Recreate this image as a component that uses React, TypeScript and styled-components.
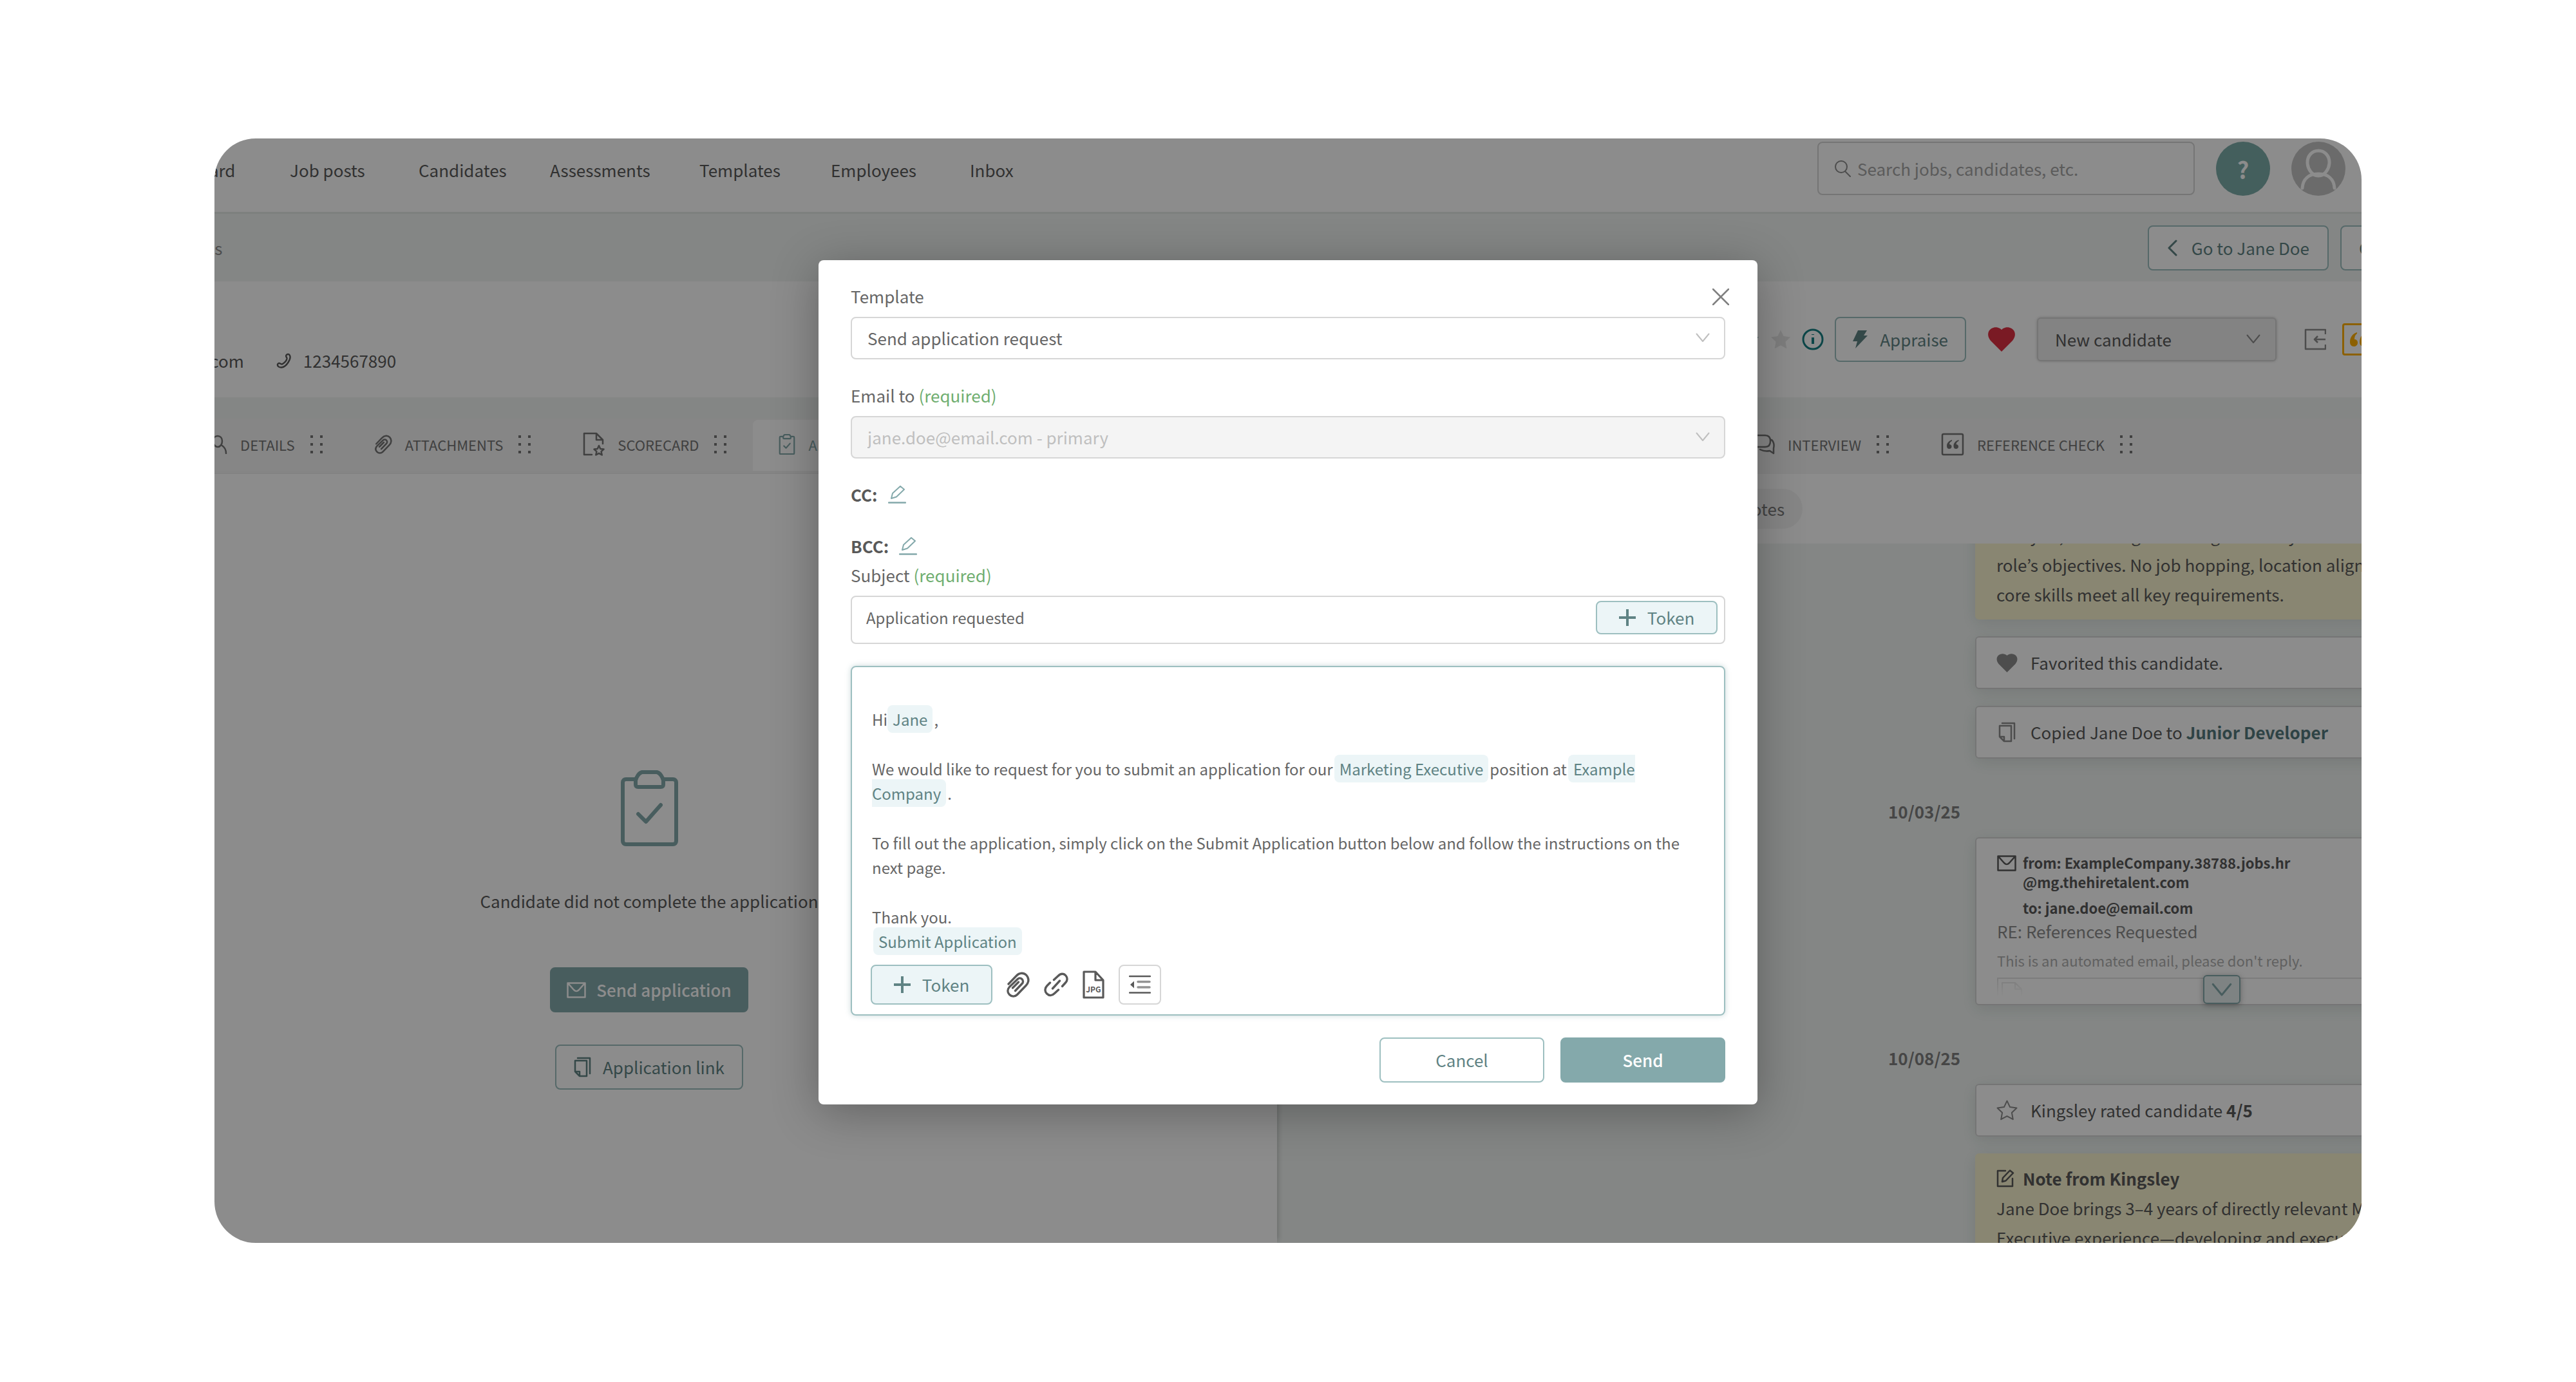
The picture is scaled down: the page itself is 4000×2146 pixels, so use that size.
import React, { useState } from 'react';
import styled, { createGlobalStyle, css } from 'styled-components';

const c = {
  text: '#595959',
  muted: '#8c8c8c',
  label: '#666666',
  teal: '#84a9ab',
  tealDark: '#5f8384',
  tealLine: '#9dbfc0',
  tealSoft: '#ecf5f7',
  line: '#d6d6d6',
  band: '#f1f5f3',
  note: '#f9f4cf',
  green: '#6fae70',
};

const GlobalStyle = createGlobalStyle`
  *, *::before, *::after { box-sizing: border-box; }
  body { margin: 0; background: #fff; }
  body, button, input, select {
    font-family: 'Noto Sans CJK KR', 'Noto Sans', sans-serif;
    font-size: 26px;
    line-height: 40px;
    color: ${c.text};
  }
  button { cursor: pointer; }
  svg { display: block; flex: none; }
  p { margin: 0; }
`;

/* ---------- icons ---------- */

type IconProps = { w: number; h: number; vb: string; sw?: number; children: React.ReactNode };
const Icon = ({ w, h, vb, sw = 2, children }: IconProps) => (
  <svg width={w} height={h} viewBox={vb} fill="none" stroke="currentColor" strokeWidth={sw}
    strokeLinecap="round" strokeLinejoin="round" aria-hidden="true">{children}</svg>
);

const SearchIcon = () => (
  <Icon w={26} h={28} vb="0 0 26 28"><circle cx="11" cy="11" r="9" /><path d="M17 18l8 8" /></Icon>
);
const ChevronDown = ({ w = 22, h = 15 }: { w?: number; h?: number }) => (
  <Icon w={w} h={h} vb="0 0 22 15"><path d="M1.5 1.5L11 13l9.500-11.500" /></Icon>
);
const ChevronLeft = () => (
  <Icon w={16} h={26} vb="0 0 16 26" sw={3}><path d="M14 2L3 13l11 11" /></Icon>
);
const PhoneIcon = () => (
  <Icon w={24} h={24} vb="0 0 24 24" sw={2.4}>
    <path d="M15.500 3.500c1.500-2 4.500-2 5.500.5 2.500 5-5 17.500-12.500 18.500-4 .5-7-2-6.500-4.500.5-2 2.500-2.500 4-1.500 1.500 1 2.500 1.500 4 .5 3-2 6-5.500 6.500-8 .3-2.500-2.500-3-1-5.500z" />
  </Icon>
);
const BoltIcon = () => (
  <svg width="24" height="28" viewBox="0 0 24 28" fill="currentColor" aria-hidden="true">
    <path d="M8 0h14l-5 8h6L4 28l3-11H0z" />
  </svg>
);
const HeartIcon = ({ w, h }: { w: number; h: number }) => (
  <svg width={w} height={h} viewBox="0 0 42 38" fill="currentColor" aria-hidden="true">
    <path d="M21 38L4 21C-1 15-1 8 3 4c5-5 13-5 18 0 5-5 13-5 18 0 4 4 4 11-1 17z" />
  </svg>
);
const STAR = 'M16 1.500l4.600 9.600 10.400 1.400-7.600 7.300 1.900 10.400L16 25.200l-9.300 5 1.900-10.400L1 12.500l10.400-1.400z';
const StarSolid = () => (
  <svg width="32" height="32" viewBox="0 0 32 32" fill="currentColor" aria-hidden="true"><path d={STAR} /></svg>
);
const StarLine = () => <Icon w={33} h={32} vb="0 0 32 32"><path d={STAR} /></Icon>;
const InfoIcon = () => (
  <Icon w={34} h={34} vb="0 0 34 34" sw={3}>
    <circle cx="17" cy="17" r="15" /><path d="M17 14v10M17 9v1" strokeWidth="4" strokeLinecap="butt" />
  </Icon>
);
const ExitIcon = () => (
  <Icon w={34} h={34} vb="0 0 34 34" sw={2.500}>
    <path d="M33 9V2H2v30h31v-7M33 17H16M21 12l-5 5 5 5" strokeLinecap="butt" />
  </Icon>
);
const QuoteGlyph = () => (
  <svg width="28" height="24" viewBox="0 0 28 24" fill="currentColor" aria-hidden="true">
    <path d="M11 1C4 3 0 9 0 16c0 4 2 7 6 7 3 0 6-2 6-6 0-3-2-5-5-5 0-4 1-7 4-9zM26 1c-7 2-11 8-11 15 0 4 2 7 6 7 3 0 6-2 6-6 0-3-2-5-5-5 0-4 1-7 4-9z" />
  </svg>
);
const QuoteBox = () => (
  <Icon w={36} h={36} vb="0 0 36 36" sw={2.500}>
    <rect x="2" y="2" width="32" height="32" rx="2" />
    <path fill="currentColor" stroke="none" d="M17 11c-5 1.500-8 5-8 9.500 0 3 1.500 4.500 3.800 4.500 2.200 0 3.700-1.500 3.700-3.600S15 18 13 18c.3-2.500 1.500-4 4-5.200zM27.500 11c-5 1.500-8 5-8 9.500 0 3 1.500 4.500 3.800 4.500 2.200 0 3.700-1.500 3.700-3.600S25.500 18 23.500 18c.3-2.500 1.500-4 4-5.200z" />
  </Icon>
);
const UserIcon = () => (
  <Icon w={30} h={30} vb="0 0 30 30" sw={2.500}>
    <path d="M15 19c4 0 7-4 7-9s-3-8-7-8-7 3-7 8 3 9 7 9zM8 17c-3 2-6 6-6 12M22 17c3 2 6 6 6 12" />
  </Icon>
);
const ClipIcon = ({ w = 27, h = 30, sw = 2.500 }: { w?: number; h?: number; sw?: number }) => (
  <Icon w={w} h={h} vb="0 0 36 40" sw={sw * 1.2}>
    <path d="M3 19L15 6.500C20 1 27 1 31 5.500s4 11-1 16L16.500 35.500c-3.500 3.500-8.500 3.500-12 0s-3.500-8 0-12L17 11.500c2-2 5-2 7 0s2 5 0 7L13.500 29.500M9.500 25L18.500 16" />
  </Icon>
);
const LinkIcon = () => (
  <Icon w={38} h={38} vb="0 0 38 38" sw={3.400}>
    <path d="M15.500 11.500l6.500-6c4-4.500 9-4 12-.5s2.500 8-1 11.500L28.500 21.500M9.500 16L5 20.500c-4 4-4 9-.5 12.500s8 3.500 12-.5L22.500 27M13.500 25l11-12" />
  </Icon>
);
const JpgIcon = () => (
  <Icon w={34} h={44} vb="0 0 34 44" sw={3.200}>
    <path d="M2 2h18l12 13v27H2zM20 2v13h12" />
    <text x="17" y="34" textAnchor="middle" fontSize="12" fontWeight="700" fill="currentColor" stroke="none">JPG</text>
  </Icon>
);
const IndentIcon = () => (
  <Icon w={34} h={30} vb="0 0 34 30" sw={2.500}>
    <path d="M1 2h32M1 27.500h32" /><path d="M14 10.500h18M14 19h18" strokeOpacity=".65" strokeWidth="3.500" />
    <path d="M8 9.500v11L2 15z" fill="currentColor" stroke="none" />
  </Icon>
);
const ScoreIcon = () => (
  <Icon w={34} h={37} vb="0 0 34 37" sw={2.500}>
    <path d="M14 35H2V2h19l10 10v6M21 2v10h10" />
    <path d="M25 21l2.300 5 5.200.6-3.900 3.600 1.100 5.300-4.700-2.700-4.700 2.700 1.100-5.300-3.900-3.600 5.200-.6z" />
  </Icon>
);
const ClipboardIcon = ({ w, h, sw }: { w: number; h: number; sw: number }) => (
  <Icon w={w} h={h} vb="0 0 89 118" sw={sw}>
    <path d="M22 14H8c-3 0-5 2-5 5v91c0 3 2 5 5 5h73c3 0 5-2 5-5V19c0-3-2-5-5-5H67" />
    <path d="M33 3h23c5 1 9 8 10 13v6c0 3-1 4-4 4H27c-3 0-4-1-4-4v-6c1-5 5-12 10-13zM27 68l12 12 23-26" />
  </Icon>
);
const ChatIcon = () => (
  <Icon w={36} h={32} vb="0 0 36 32" sw={2.500}>
    <path d="M2 25V5c0-2 1-3 3-3h16c5 0 8 3 8 9s-3 9-8 9H9zM31 9c4 4 4 9 3 13v8l-6-4c-5 1-11 0-15-2" />
  </Icon>
);
const MailIcon = () => (
  <Icon w={30} h={25} vb="0 0 30 25" sw={2.500}>
    <path d="M1.500 1.500h27v22h-27zM3 3l8 9c3 3 5 3 8 0l8-9" />
  </Icon>
);
const CopyIcon = () => (
  <Icon w={27} h={32} vb="0 0 27 32" sw={2.500}>
    <path d="M6 2h19v24M2 6h18v24H9l-7-7zM2 23h7v7" />
  </Icon>
);
const EditIcon = () => (
  <Icon w={28} h={28} vb="0 0 28 28" sw={2.500}>
    <path d="M14 2H2v24h23V14M9 19l1-6L21 1.500l5 4L14.500 17.500z" />
  </Icon>
);
const PencilIcon = () => (
  <Icon w={28} h={28} vb="0 0 28 28" sw={2}>
    <path d="M5 20l2-8L19 1l6 5-12 11.500z" /><path d="M1 26.500h26" strokeWidth="2.500" />
  </Icon>
);
const PlusIcon = () => (
  <Icon w={26} h={26} vb="0 0 26 26" sw={4}><path d="M13 0v26M0 13h26" strokeLinecap="butt" /></Icon>
);
const CloseIcon = () => <Icon w={26} h={26} vb="0 0 26 26" sw={2.500}><path d="M1 1l24 24M25 1L1 25" /></Icon>;
const Grip = () => (
  <svg width="20" height="30" viewBox="0 0 20 30" fill="currentColor" aria-hidden="true">
    {[1, 13, 25].map((y) => [0, 15].map((x) => <rect key={`${x}-${y}`} x={x} y={y} width="4" height="4" />))}
  </svg>
);
const AvatarIcon = () => (
  <Icon w={84} h={84} vb="0 0 84 84" sw={5}>
    <path d="M42 14c-10 0-17 8-17 18s7 21 17 21 17-11 17-21-7-18-17-18zM17 72c1-14 10-22 25-22s24 8 25 22" />
  </Icon>
);

/* ---------- frame ---------- */

const Stage = styled.main`
  display: flex;
  flex-direction: column;
  min-height: 100vh;
  padding: 215px 333px 216px;
`;

const Frame = styled.div`
  position: relative;
  display: flex;
  flex: 1 0 0;
  overflow: hidden;
  border-radius: 64px;
`;

const Page = styled.div`
  display: flex;
  flex: 1;
  flex-direction: column;
  height: 1736px;
  margin: -21px -200px 0 -300px;
  background: #fff;
`;

const Row = styled.div<{ $gap: number }>`
  display: flex;
  align-items: center;
  gap: ${(p) => p.$gap}px;
`;

const NavBar = styled.header`
  display: flex;
  flex: none;
  align-items: center;
  justify-content: space-between;
  height: 138px;
  padding: 0 225px 0 200px;
  border-bottom: 3px solid #e4e9e6;
`;

const NavLinks = styled.nav`
  display: grid;
  grid-template-columns: 217px 200px 204px 232px 204px 216px auto;
  padding-top: 4px;
`;

const NavLink = styled.a`
  color: ${c.text};
  text-decoration: none;
`;

const SearchBox = styled.label`
  display: flex;
  align-items: center;
  gap: 8px;
  width: 586px;
  height: 83px;
  padding: 0 24px;
  border: 2px solid ${c.line};
  border-radius: 8px;
  color: ${c.muted};
`;

const SearchInput = styled.input`
  flex: 1;
  min-width: 0;
  border: 0;
  outline: 0;
  background: none;
  &::placeholder { color: #a6a6a6; opacity: 1; }
`;

const RoundButton = styled.button<{ $bg: string }>`
  display: grid;
  place-items: center;
  width: 84px;
  height: 84px;
  padding: 0;
  border: 0;
  border-radius: 50%;
  background: ${(p) => p.$bg};
  color: #fff;
  font-size: 36px;
  font-weight: 700;
`;

const SubBar = styled.div`
  display: flex;
  flex: none;
  align-items: center;
  justify-content: space-between;
  height: 105px;
  padding: 0 33px 0 143px;
  background: ${c.band};
`;

const Button = styled.button<{ $solid?: boolean; $w?: number; $pad?: number; $gap?: number }>`
  display: flex;
  align-items: center;
  justify-content: center;
  gap: ${(p) => p.$gap ?? 18}px;
  height: 70px;
  ${(p) => p.$w && css`width: ${p.$w}px;`}
  padding: 0 ${(p) => p.$pad ?? 26}px;
  border: 2px solid ${(p) => (p.$solid ? c.teal : c.tealLine)};
  border-radius: 8px;
  background: ${(p) => (p.$solid ? c.teal : '#fff')};
  color: ${(p) => (p.$solid ? '#fff' : c.tealDark)};
  font-weight: ${(p) => (p.$solid ? 500 : 400)};
`;

const CandidateBar = styled.section`
  display: flex;
  flex: none;
  align-items: center;
  justify-content: space-between;
  height: 180px;
  padding: 0 180px 0 89px;
`;

const Contact = styled.div`
  display: flex;
  align-self: flex-end;
  align-items: center;
  gap: 50px;
  padding-bottom: 37px;
`;

const Tint = styled.span<{ $color: string }>`
  display: inline-flex;
  color: ${(p) => p.$color};
`;

const Actions = styled.div`
  display: flex;
  align-items: center;
  gap: 34px;
`;

const StageSelect = styled.div`
  position: relative;
  width: 372px;
  color: ${c.muted};
  select {
    width: 100%;
    height: 68px;
    padding: 0 60px 0 26px;
    border: 2px solid ${c.line};
    border-radius: 6px;
    appearance: none;
    background: #efefef;
    box-shadow: 0 0 4px rgba(0, 0, 0, 0.2);
  }
  svg { position: absolute; top: 26px; right: 25px; pointer-events: none; }
`;

const QuoteButton = styled.button`
  display: flex;
  align-items: center;
  width: 50px;
  height: 50px;
  padding: 0 9px;
  border: 3px solid #ffb000;
  border-radius: 4px;
  background: #fff;
  color: #ffb000;
`;

const TabBar = styled.div`
  flex: none;
  padding-top: 33px;
  background: ${c.band};
`;

const Tabs = styled.div`
  display: flex;
  justify-content: space-between;
  padding: 2px 515px 5px 250px;
  background: #f4f4f4;
`;

const Tab = styled.button<{ $active?: boolean }>`
  display: flex;
  align-items: center;
  gap: 20px;
  height: 79px;
  padding: 0 40px 4px;
  border: 0;
  border-radius: 8px 8px 0 0;
  background: ${(p) => (p.$active ? '#fff' : 'transparent')};
  color: ${(p) => (p.$active ? c.teal : '#757575')};
  font-size: 22px;
`;

const TabLabel = styled.span`
  padding-right: 4px;
`;

const Split = styled.div`
  display: grid;
  flex: 1;
  grid-template-columns: 325fr 314fr;
  min-height: 0;
`;

const LeftPanel = styled.section`
  display: flex;
  z-index: 1;
  flex-direction: column;
  align-items: center;
  padding-top: 460px;
  background: #fff;
  box-shadow: 6px 0 8px -4px rgba(0, 0, 0, 0.2);
`;

const EmptyText = styled.p`
  margin: 65px 0 83px;
`;

const LinkAction = styled.div`
  margin-top: 50px;
`;

const RightPanel = styled.section`
  display: flex;
  flex-direction: column;
  min-height: 0;
  background: ${c.band};
`;

const PillBar = styled.div`
  display: flex;
  flex: none;
  align-items: center;
  height: 108px;
  padding-left: 690px;
  background: #fff;
`;

const Pill = styled.button`
  height: 62px;
  padding: 0 28px;
  border: 0;
  border-radius: 31px;
  background: #f4f4f4;
  color: #7a7a7a;
`;

const Feed = styled.div`
  flex: 1;
  overflow: hidden;
  padding: 0 35px 0 949px;
`;

const FeedDate = styled.div`
  margin: 62px 0 20px;
  color: #808080;
  font-weight: 700;
`;

const cardBase = css`
  margin: 0 0 26px 135px;
  border-radius: 6px;
  box-shadow: 0 6px 24px rgba(60, 90, 80, 0.14);
`;

const EventCard = styled.article`
  ${cardBase}
  display: flex;
  align-items: center;
  gap: 20px;
  height: 82px;
  padding: 0 31px;
  border: 2px solid ${c.line};
  background: #fff;
  > svg, > span { color: ${c.muted}; }
  p { white-space: nowrap; }
`;

const IconSlot = styled.span`
  display: flex;
  justify-content: center;
  width: 33px;
`;

const NoteCard = styled.article<{ $scrolled?: boolean }>`
  ${cardBase}
  padding: 16px 33px;
  ${(p) => p.$scrolled && css`margin-top: -52px;`}
  background: ${c.note};
  line-height: 46px;
  white-space: nowrap;
`;

const MailCard = styled.article`
  ${cardBase}
  position: relative;
  height: 261px;
  padding: 22px 0 0 32px;
  border: 2px solid ${c.line};
  background: #fff;
  font-size: 22px;
  line-height: 30px;
`;

const MailHead = styled.div`
  display: grid;
  grid-template-columns: 30px 1fr;
  column-gap: 10px;
  row-gap: 10px;
  font-weight: 700;
  svg { margin-top: 4px; }
  p { grid-column: 2; }
`;

const MailSubject = styled.p`
  margin: 2px 0 10px;
  color: ${c.muted};
  font-size: 26px;
  line-height: 40px;
`;

const MailBody = styled.p`
  margin-bottom: 12px;
  color: #b0b0b0;
`;

const MissingImage = styled.div`
  height: 40px;
  padding: 4px;
  border: 2px solid #e2e2e2;
  border-width: 2px 0 0 2px;
  color: #e2e2e2;
  mask-image: linear-gradient(#000, transparent 75%);
`;

const ExpandButton = styled.button`
  position: absolute;
  bottom: 0;
  left: 50%;
  display: grid;
  place-items: center;
  width: 58px;
  height: 45px;
  margin-left: -29px;
  padding: 0;
  border: 2px solid ${c.teal};
  border-radius: 6px;
  background: #e6efef;
  color: ${c.teal};
  box-shadow: 0 2px 10px rgba(0, 0, 0, 0.3);
`;

/* ---------- dialog ---------- */

const Overlay = styled.div`
  position: absolute;
  z-index: 2;
  inset: 0;
  display: flex;
  align-items: flex-start;
  justify-content: center;
  padding-top: 189px;
  background: rgba(0, 0, 0, 0.45);
`;

const Dialog = styled.form`
  position: relative;
  width: 1458px;
  max-width: 100%;
  padding: 36px 50px 34px;
  border-radius: 8px;
  background: #fff;
  box-shadow: 0 12px 72px rgba(0, 0, 0, 0.3);
`;

const CloseButton = styled.button`
  position: absolute;
  top: 44px;
  right: 44px;
  padding: 0;
  border: 0;
  background: none;
  color: #808080;
`;

const Field = styled.div`
  margin-bottom: 36px;
  color: ${c.label};
  label { display: block; margin-bottom: 12px; }
`;

const Required = styled.span`
  color: ${c.green};
`;

const SelectWrap = styled.div`
  position: relative;
  color: #bfbfbf;
  select {
    display: block;
    width: 100%;
    height: 66px;
    padding: 0 60px 0 24px;
    border: 2px solid ${c.line};
    border-radius: 8px;
    appearance: none;
    background: #fff;
    color: ${c.label};
    opacity: 1;
  }
  select:disabled { background: #f4f4f4; color: #bfbfbf; }
  svg { position: absolute; top: 25px; right: 24px; pointer-events: none; }
`;

const CopyLine = styled.div`
  display: flex;
  align-items: center;
  gap: 16px;
  margin-bottom: 40px;
  color: ${c.text};
  font-weight: 700;
  & + & { margin-bottom: 5px; }
`;

const IconButton = styled.button<{ $color?: string; $boxed?: boolean }>`
  display: grid;
  place-items: center;
  padding: 0;
  border: 0;
  background: none;
  color: ${(p) => p.$color ?? c.text};
  ${(p) => p.$boxed && css`
    width: 66px;
    height: 62px;
    border: 2px solid ${c.line};
    border-radius: 8px;
  `}
`;

const SubjectBox = styled.div`
  display: flex;
  align-items: flex-start;
  height: 75px;
  padding: 6px 10px 0 22px;
  border: 2px solid ${c.line};
  border-radius: 8px;
  input {
    flex: 1;
    min-width: 0;
    height: 50px;
    padding: 0;
    border: 0;
    outline: 0;
    color: ${c.label};
    font-size: 24px;
  }
`;

const TokenButton = styled.button<{ $h: number }>`
  display: flex;
  align-items: center;
  justify-content: center;
  gap: 18px;
  width: 189px;
  height: ${(p) => p.$h}px;
  padding: 0;
  border: 2px solid ${c.tealLine};
  border-radius: 8px;
  background: ${c.tealSoft};
  color: ${c.tealDark};
`;

const Editor = styled.div`
  margin-top: -2px;
  padding: 62px 31px 15px;
  border: 2px solid ${c.tealLine};
  border-radius: 8px;
  box-shadow: 0 0 8px rgba(132, 169, 171, 0.45);
`;

const Message = styled.div`
  outline: 0;
  font-size: 24px;
  line-height: 38px;
  color: ${c.label};
  p + p { margin-top: 39px; }
`;

const Chip = styled.span`
  margin-left: 2px;
  margin-right: 2px;
  padding: 4px 8px;
  border-radius: 8px;
  background: ${c.tealSoft};
  color: ${c.tealDark};
  &:first-child:last-child { margin-left: 0; }
`;

const Greeting = styled.p`
  ${Chip} { margin-left: 2px; }
`;

const Toolbar = styled.div`
  display: flex;
  align-items: center;
  gap: 22px;
  margin: 17px 0 0 -2px;
`;

const Footer = styled.div`
  display: flex;
  justify-content: flex-end;
  gap: 25px;
  margin-top: 34px;
`;

const leftTabs = [
  { label: 'DETAILS', icon: <UserIcon /> },
  { label: 'ATTACHMENTS', icon: <ClipIcon sw={2.800} /> },
  { label: 'SCORECARD', icon: <ScoreIcon /> },
  { label: 'APPLICATION', icon: <ClipboardIcon w={26} h={32} sw={8} />, active: true },
];
const rightTabs = [
  { label: 'INTERVIEW', icon: <ChatIcon /> },
  { label: 'REFERENCE CHECK', icon: <QuoteBox /> },
];

const TabGroup = ({ items }: { items: { label: string; icon: React.ReactNode; active?: boolean }[] }) => (
  <Row $gap={0}>
    {items.map((t) => (
      <Tab key={t.label} type="button" $active={t.active}>{t.icon}<TabLabel>{t.label}</TabLabel><Grip /></Tab>
    ))}
  </Row>
);

export default function App() {
  const [subject, setSubject] = useState('Application requested');
  return (
    <Stage>
      <GlobalStyle />
      <Frame>
        <Page>
          <NavBar>
            <NavLinks>
              {['Dashboard', 'Job posts', 'Candidates', 'Assessments', 'Templates', 'Employees', 'Inbox'].map((n) => (
                <NavLink key={n} href="#">{n}</NavLink>
              ))}
            </NavLinks>
            <Row $gap={33}>
              <SearchBox>
                <SearchIcon />
                <SearchInput aria-label="Search" placeholder="Search jobs, candidates, etc." />
              </SearchBox>
              <RoundButton type="button" $bg="#7dada9">?</RoundButton>
              <RoundButton type="button" $bg="#c4c4c4" aria-label="Account"><AvatarIcon /></RoundButton>
            </Row>
          </NavBar>

          <SubBar>
            <Tint $color={c.muted}>All candidates</Tint>
            <Row $gap={18}>
              <Button type="button" $pad={28} $gap={22}><ChevronLeft />Go to Jane Doe</Button>
              <Button type="button" $w={200}>Compare to</Button>
            </Row>
          </SubBar>

          <CandidateBar>
            <Contact>
              <span>jane.doe@email.com</span>
              <Row $gap={18}><PhoneIcon /><span>1234567890</span></Row>
            </Contact>
            <Row $gap={43}>
              <Actions>
                <Row $gap={17}>
                  <Tint $color={c.teal}><StarSolid /></Tint>
                  <Tint $color="#e6e6e6"><StarSolid /></Tint>
                  <Tint $color="#178084"><InfoIcon /></Tint>
                  <Button type="button"><BoltIcon />Appraise</Button>
                </Row>
                <Tint $color="#de3143"><HeartIcon w={42} h={38} /></Tint>
                <StageSelect>
                  <select aria-label="Stage"><option>New candidate</option></select>
                  <ChevronDown />
                </StageSelect>
              </Actions>
              <Row $gap={25}>
                <IconButton type="button" aria-label="Move" $color={c.muted}><ExitIcon /></IconButton>
                <QuoteButton type="button" aria-label="Quotes"><QuoteGlyph /></QuoteButton>
              </Row>
            </Row>
          </CandidateBar>

          <TabBar>
            <Tabs>
              <TabGroup items={leftTabs} />
              <TabGroup items={rightTabs} />
            </Tabs>
          </TabBar>

          <Split>
            <LeftPanel>
              <Tint $color={c.teal}><ClipboardIcon w={89} h={118} sw={6} /></Tint>
              <EmptyText>Candidate did not complete the application</EmptyText>
              <Button type="button" $solid $pad={24} $gap={16}><MailIcon />Send application</Button>
              <LinkAction>
                <Button type="button" $pad={27}><CopyIcon />Application link</Button>
              </LinkAction>
            </LeftPanel>

            <RightPanel>
              <PillBar><Pill type="button">Notes</Pill></PillBar>
              <Feed>
                <NoteCard $scrolled>
                  <p>analysis, including executing it directly for the</p>
                  <p>role’s objectives. No job hopping, location aligned,</p>
                  <p>core skills meet all key requirements.</p>
                </NoteCard>
                <EventCard><HeartIcon w={33} h={29} /><p>Favorited this candidate.</p></EventCard>
                <EventCard>
                  <IconSlot><CopyIcon /></IconSlot>
                  <p>Copied Jane Doe to <b><Tint $color="#557a7e">Junior Developer</Tint></b></p>
                </EventCard>
                <FeedDate>10/03/25</FeedDate>
                <MailCard>
                  <MailHead>
                    <MailIcon />
                    <p>from: ExampleCompany.38788.jobs.hr<br />@mg.thehiretalent.com</p>
                    <p>to: jane.doe@email.com</p>
                  </MailHead>
                  <MailSubject>RE: References Requested</MailSubject>
                  <MailBody>This is an automated email, please don't reply.</MailBody>
                  <MissingImage>
                    <Icon w={34} h={36} vb="0 0 34 36"><path d="M2 34V2h20l10 10v22M22 2v10h10" /></Icon>
                  </MissingImage>
                  <ExpandButton type="button" aria-label="Expand"><ChevronDown w={32} h={22} /></ExpandButton>
                </MailCard>
                <FeedDate>10/08/25</FeedDate>
                <EventCard><StarLine /><p>Kingsley rated candidate <b>4/5</b></p></EventCard>
                <NoteCard>
                  <Row $gap={13}><EditIcon /><b>Note from Kingsley</b></Row>
                  <p>Jane Doe brings 3–4 years of directly relevant Marketing</p>
                  <p>Executive experience—developing and executing</p>
                </NoteCard>
              </Feed>
            </RightPanel>
          </Split>
        </Page>

        <Overlay>
          <Dialog role="dialog" aria-label="Send application request" onSubmit={(e) => e.preventDefault()}>
            <CloseButton type="button" aria-label="Close"><CloseIcon /></CloseButton>
            <Field>
              <label htmlFor="template">Template</label>
              <SelectWrap>
                <select id="template"><option>Send application request</option></select>
                <ChevronDown />
              </SelectWrap>
            </Field>
            <Field>
              <label htmlFor="email-to">Email to <Required>(required)</Required></label>
              <SelectWrap>
                <select id="email-to" disabled><option>jane.doe@email.com - primary</option></select>
                <ChevronDown />
              </SelectWrap>
            </Field>
            <CopyLine>CC:<IconButton type="button" aria-label="Edit CC" $color={c.teal}><PencilIcon /></IconButton></CopyLine>
            <CopyLine>BCC:<IconButton type="button" aria-label="Edit BCC" $color={c.teal}><PencilIcon /></IconButton></CopyLine>
            <Field>
              <label htmlFor="subject">Subject <Required>(required)</Required></label>
              <SubjectBox>
                <input id="subject" value={subject} onChange={(e) => setSubject(e.target.value)} />
                <TokenButton type="button" $h={52}><PlusIcon />Token</TokenButton>
              </SubjectBox>
            </Field>
            <Editor>
              <Message role="textbox" aria-label="Message" aria-multiline="true">
                <Greeting>Hi<Chip>Jane</Chip>,</Greeting>
                <p>
                  We would like to request for you to submit an application for our<Chip>Marketing Executive</Chip>position
                  at<Chip>Example Company</Chip>.
                </p>
                <p>
                  To fill out the application, simply click on the Submit Application button below and follow the
                  instructions on the next page.
                </p>
                <p>Thank you.<br /><Chip>Submit Application</Chip></p>
              </Message>
              <Toolbar>
                <TokenButton type="button" $h={62}><PlusIcon />Token</TokenButton>
                <IconButton type="button" aria-label="Attach file"><ClipIcon w={36} h={40} sw={2.800} /></IconButton>
                <IconButton type="button" aria-label="Insert link"><LinkIcon /></IconButton>
                <IconButton type="button" aria-label="Insert image"><JpgIcon /></IconButton>
                <IconButton type="button" aria-label="Outdent" $boxed><IndentIcon /></IconButton>
              </Toolbar>
            </Editor>
            <Footer>
              <Button type="button" $w={256}>Cancel</Button>
              <Button type="submit" $w={256} $solid>Send</Button>
            </Footer>
          </Dialog>
        </Overlay>
      </Frame>
    </Stage>
  );
}
